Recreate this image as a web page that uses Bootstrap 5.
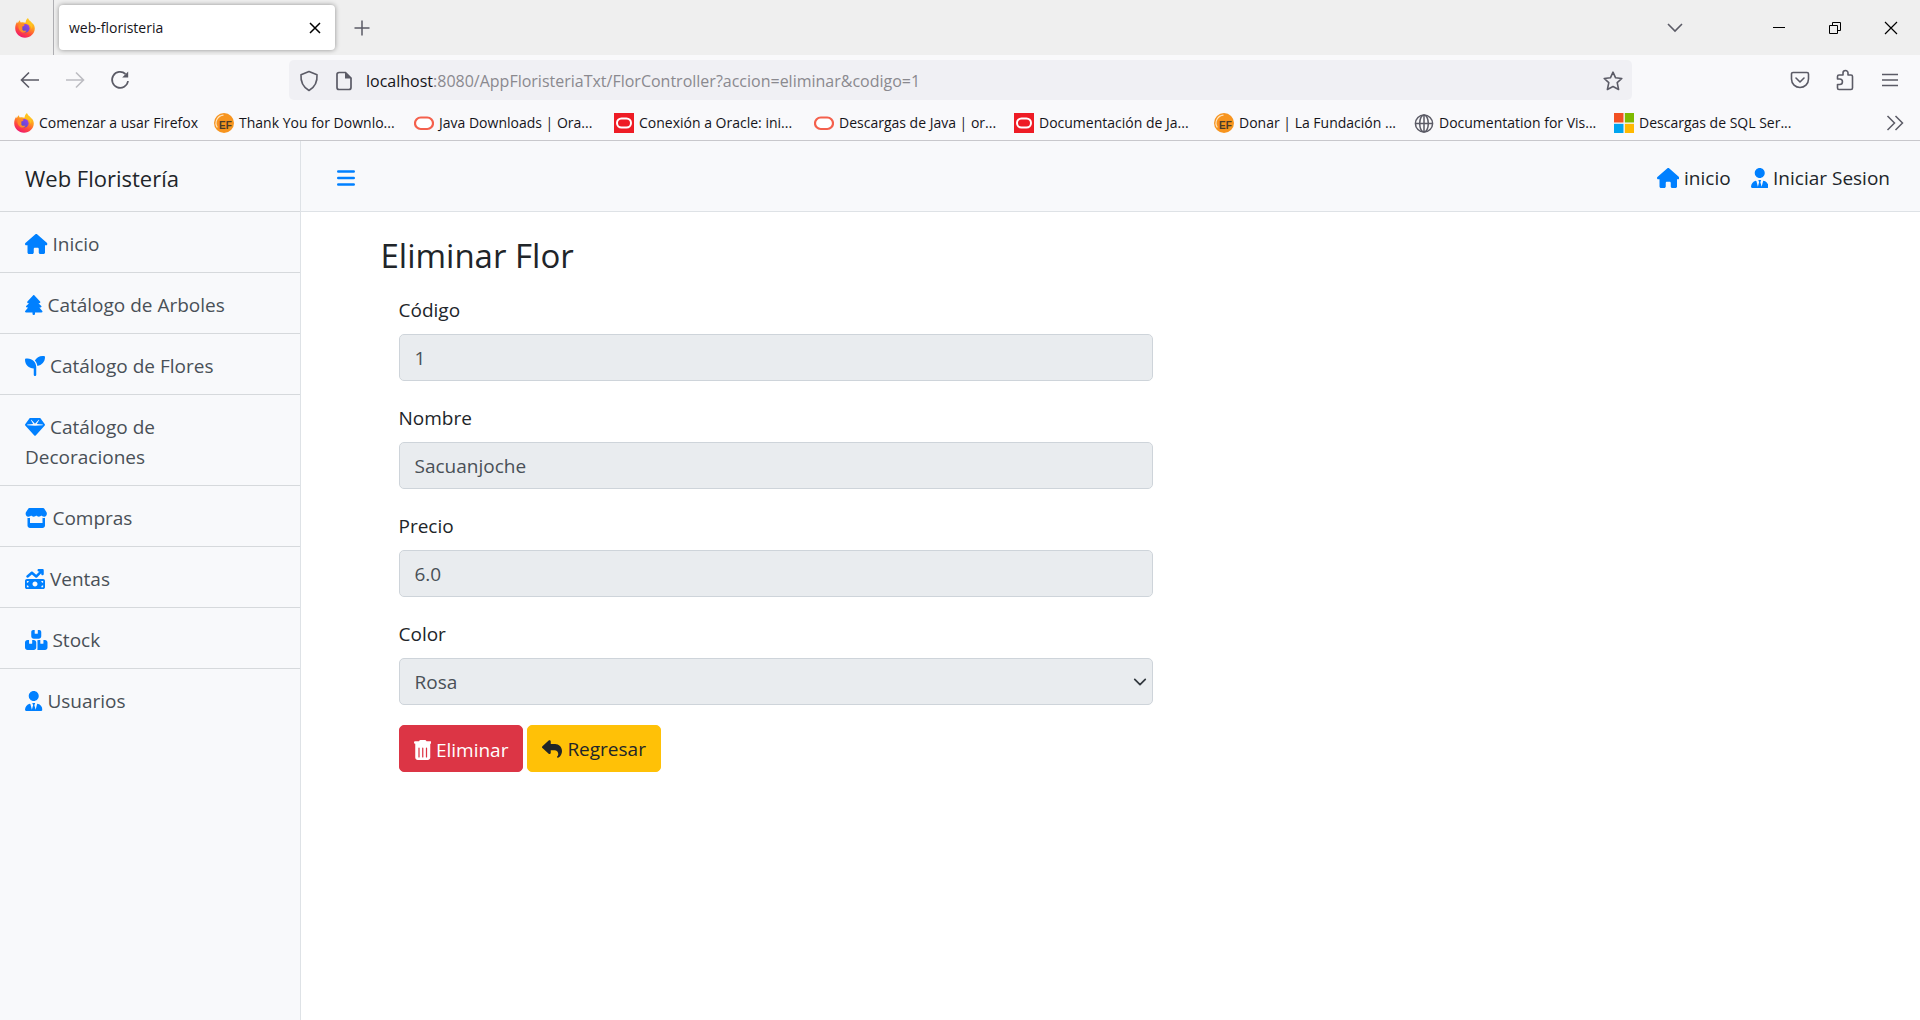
<!DOCTYPE html>
<html lang="es">
<head>
<meta charset="utf-8">
<meta name="viewport" content="width=device-width, initial-scale=1">
<title>web-floristeria</title>
<link rel="stylesheet" href="https://cdn.jsdelivr.net/npm/bootstrap@5.3.0/dist/css/bootstrap.min.css">
<style>
  body { font-family: "Open Sans", "Noto Sans", sans-serif; font-size: 19px; line-height: 30px; color: #212529; background: #fff; }
  button { color: inherit; }
  svg { flex: none; }

  /* browser chrome */
  .chrome { font-size: 14px; line-height: 20px; background: #f9f9fb; border-bottom: 1px solid #c8c8cc; color: #15141a; }
  .icon-btn { display: inline-flex; align-items: center; justify-content: center; padding: 0; border: 0; background: none; color: #5b5b66; }
  .tab-strip { height: 55px; background: #efefef; padding-right: 1px; }
  .pinned { width: 54px; border-right: 1px solid #aeaeb2; padding-left: 15px; }
  .tab-item { width: 276px; height: 45px; margin-left: 5px; padding: 0 12px 0 10px; background: #fff; border-radius: 4px; box-shadow: 0 0 5px rgba(0,0,0,.4); }
  .win-btn { width: 56px; height: 40px; color: #000; }
  .tool-row { height: 50px; padding-left: 7px; }
  .nav-btn { width: 45px; height: 40px; }
  .url-field { height: 40px; background: #f0f0f4; border-radius: 5px; padding: 2px 9px 0; margin-left: 147px; margin-right: 145px; font-size: 16px; }
  .url-field label { margin-left: 14px; }
  .url-field input { border: 0; background: none; padding: 0; color: #8a898f; outline: 0; min-width: 0; }
  .side-btn { width: 45px; height: 40px; }
  .bookmark { width: 200px; gap: 5px; color: #15141a; text-decoration: none; white-space: nowrap; }
  .bookmark-row { height: 35px; padding-left: 14px; }

  /* application */
  .app-shell { min-height: calc(100vh - 141px); }
  .side-menu { width: 301px; flex: none; background: #f8f9fb; border-right: 1px solid #dee2e6; }
  .menu-title { font-size: 22px; padding: 22px 25px 18px; border-bottom: 1px solid #d6d9dc; }
  .menu-link { display: block; padding: 17px 25px 13px; color: #495057; text-decoration: none; border-bottom: 1px solid #d6d9dc; }
  .menu-link:last-child { border-bottom: 0; }
  .fa-ico { height: 20px; width: auto; fill: #0080ff; vertical-align: -3px; }
  .fa-ico.plain { fill: currentColor; }
  .top-bar { background: #f8f9fb; border-bottom: 1px solid #dee2e6; height: 71px; padding: 3px 30px 0 36px; }
  .top-bar a { color: #212529; text-decoration: none; }
  .form-area { max-width: 1460px; margin: 0 auto; padding-top: 20px; }
  .form-area h1 { font-size: 33px; line-height: 48px; font-weight: 400; margin: 0 0 13px; }
  .form-col { max-width: 790px; padding: 0 18px; }
  .form-col .form-label { display: block; padding-top: 2px; margin: 0 0 9px; }
  .form-col .form-control, .form-col .form-select { height: 47px; font-size: 19px; line-height: 30px; padding: 8px 15px; color: #495057; background-color: #e9ecef; border-color: #ced4da; border-radius: 5px; opacity: 1; }
  .form-col .form-select { background-size: 14px; background-position: right 5px center; }
  .field { margin-bottom: 20px; }
  .form-col .btn { font-size: 19px; line-height: 30px; height: 47px; padding: 8px 14px 6px; border-radius: 5px; border-width: 1px; }
  .form-col .btn-warning { --bs-btn-color: #212529; }
</style>
<script src="https://cdn.jsdelivr.net/npm/bootstrap@5.3.0/dist/js/bootstrap.bundle.min.js"></script>
</head>
<body>
<svg width="0" height="0" class="position-absolute" aria-hidden="true">
  <defs>
    <linearGradient id="ffBody" x1="0.8" y1="0" x2="0.3" y2="1"><stop offset="0" stop-color="#ffe226"/><stop offset=".4" stop-color="#ff9a1f"/><stop offset=".7" stop-color="#ff4a3d"/><stop offset="1" stop-color="#ee1572"/></linearGradient>
    <linearGradient id="ffCore" x1="1" y1="0" x2="0" y2="1"><stop offset="0" stop-color="#a03ef0"/><stop offset="1" stop-color="#4a4fc4"/></linearGradient>
    <symbol id="firefox" viewBox="0 0 20 20">
      <path fill="url(#ffBody)" d="M13 .3c.4 1.400 1.100 2.300 2.500 3.300.9.700 1.300 1.500 1.500 2.300.3-.3.4-.7.4-1.200C19 6.500 19.800 8.500 19.800 10.500 19.600 15.800 15.300 19.700 10 19.700S.2 15.700.2 10.300C.2 7.800 1 5.300 2.300 3.600c0 .8.100 1.300.4 1.700C3.300 4 4 2.800 5 2.200c-.1 1 .2 1.800.8 2.300 2-.4 3.300-.2 4.700.3C10.700 3 11.500 1.200 13 .3z"/>
      <path fill="#ffc21f" d="M13 .3c.4 1.400 1.100 2.300 2.500 3.300 2 1.500 2.300 4.400 1.400 7.400C16 8 14 6 11.300 5.600 10.600 3.600 11.500 1.200 13 .3z"/>
      <circle cx="10.300" cy="10.300" r="4.300" fill="url(#ffCore)"/>
      <path fill="#ff8a2a" d="M3.500 6.500c2-1 4.500-.8 6.200.2-.3 1.300-1.500 1.500-2.700 2 .8 1.200.3 2 .3 3 1 1.300 2.500 1.500 4.300.7-1 2-3.300 2.600-5.300 1.500C3.800 12.500 3 9.500 3.500 6.500z"/>
    </symbol>
    <symbol id="eclipse" viewBox="0 0 20 20">
      <circle cx="10" cy="10" r="10" fill="#f7941e"/>
      <path d="M3.300 14.500A8 8 0 0 1 9.500 2.200" fill="none" stroke="#ffe3bd" stroke-width="1.200"/>
      <text x="5" y="15.500" font-family="Liberation Sans, sans-serif" font-weight="bold" font-size="10" fill="#4a3a2a">EF</text>
    </symbol>
    <symbol id="java" viewBox="0 0 20 20"><rect x="1" y="4.500" width="18" height="11.500" rx="5.750" fill="#fff" stroke="#f4604c" stroke-width="2.200"/></symbol>
    <symbol id="oracle" viewBox="0 0 20 20"><path fill="#ee1c25" d="M0 0h20v20H0z"/><rect x="3" y="5.500" width="14" height="9" rx="4.500" fill="none" stroke="#fff" stroke-width="2"/></symbol>
    <symbol id="globe" viewBox="0 0 20 20"><g fill="none" stroke="#5b5b66" stroke-width="1.500"><circle cx="10" cy="10.500" r="8.600"/><ellipse cx="10" cy="10.500" rx="4.300" ry="8.600"/><path d="M10 2v17M1.500 10.500h17"/></g></symbol>
    <symbol id="windows" viewBox="0 0 20 20"><path fill="#f25022" d="M0 0h9.500v9.500H0z"/><path fill="#7fba00" d="M10.800 0H20v9.500h-9.200z"/><path fill="#00a4ef" d="M0 10.800h9.500V20H0z"/><path fill="#ffb900" d="M10.800 10.800H20V20h-9.200z"/></symbol>
    <symbol id="house" viewBox="0 0 576 512"><path d="M575.8 255.500c0 18-15 32.100-32 32.100h-32l.7 160.200c0 2.700-.2 5.400-.5 8.100V472c0 22.100-17.900 40-40 40H392c-22.100 0-40-17.900-40-40V384c0-17.700-14.300-32-32-32H256c-17.700 0-32 14.300-32 32v88c0 22.100-17.900 40-40 40H104c-22.100 0-40-17.900-40-40V287.600H32c-18 0-32-14-32-32.100 0-9 3-17 10-24L266.400 8c7-7 15-8 22-8s15 2 21 7L564.800 231.500c8 7 12 15 11 24z"/></symbol>
    <symbol id="tie" viewBox="0 0 448 512"><path d="M224 256c-70.700 0-128-57.300-128-128S153.300 0 224 0s128 57.300 128 128s-57.300 128-128 128zM209.100 359.200l-18.600-31c-6.400-10.700 1.300-24.200 13.700-24.200h39.500c12.400 0 20.100 13.600 13.700 24.200l-18.600 31 33.400 123.900 36-146.900c2-8.100 9.800-13.400 17.900-11.300 70.100 17.600 121.900 81 121.900 156.400 0 17-13.800 30.700-30.700 30.700H285.500c-2.100 0-4-.4-5.800-1.100l.3 1.100H168l.3-1.100c-1.800.7-3.800 1.100-5.800 1.100H30.700C13.800 512 0 498.200 0 481.300c0-75.500 51.900-138.900 121.900-156.400 8.100-2 15.900 3.300 17.900 11.300l36 146.900 33.400-123.900z"/></symbol>
  </defs>
</svg>

<header class="chrome">
  <div class="tab-strip d-flex align-items-center">
    <div class="pinned h-100 d-flex align-items-center"><svg width="20" height="20"><use href="#firefox"/></svg></div>
    <div class="tab-item d-flex align-items-center justify-content-between">
      <span>web-floristeria</span>
      <button class="icon-btn text-black" aria-label="Cerrar pestaña"><svg width="16" height="16" fill="none" stroke="currentColor" stroke-width="1.500"><path d="M3 3l10 10M13 3L3 13"/></svg></button>
    </div>
    <button class="icon-btn nav-btn ms-1" aria-label="Nueva pestaña"><svg width="16" height="16" fill="none" stroke="currentColor" stroke-width="1.500"><path d="M8 .5v15M.5 8h15"/></svg></button>
    <button class="icon-btn win-btn ms-auto me-5" aria-label="Listar pestañas"><svg width="16" height="16" fill="none" stroke="#5b5b66" stroke-width="1.600"><path d="M1 4l7 7 7-7"/></svg></button>
    <button class="icon-btn win-btn" aria-label="Minimizar"><svg width="12" height="12" stroke="currentColor"><path d="M0 5.500h12"/></svg></button>
    <button class="icon-btn win-btn" aria-label="Restaurar"><svg width="12" height="12" fill="none" stroke="currentColor"><path d="M.5 3.500h8v8h-8zM3.500 3.500v-3h8v8h-3"/></svg></button>
    <button class="icon-btn win-btn" aria-label="Cerrar"><svg width="14" height="14" stroke="currentColor" stroke-width="1.200"><path d="M1 1l12 12M13 1L1 13"/></svg></button>
  </div>

  <div class="tool-row d-flex align-items-center">
    <button class="icon-btn nav-btn" aria-label="Atrás"><svg width="20" height="18" fill="none" stroke="currentColor" stroke-width="1.600"><path d="M19 9H2M9 1.500L1.500 9 9 16.500"/></svg></button>
    <button class="icon-btn nav-btn" aria-label="Adelante"><svg width="20" height="18" fill="none" stroke="#bcbcc2" stroke-width="1.600"><path d="M1 9h17M11 1.500L18.500 9 11 16.500"/></svg></button>
    <button class="icon-btn nav-btn" aria-label="Recargar"><svg width="20" height="20" fill="none" stroke="currentColor" stroke-width="1.700"><path d="M15.500 4A8 8 0 1 0 18 11"/><path d="M18.200 1.500v6h-6z" fill="currentColor" stroke="none"/></svg></button>
    <div class="url-field d-flex align-items-center flex-grow-1">
      <svg width="22" height="22" fill="none" stroke="#5b5b66" stroke-width="1.600"><path d="M11 1.500l8 3.200c.5 6.500-2 12.300-8 15.800C5 17 2.500 11.200 3 4.700z" stroke-linejoin="round"/></svg>
      <svg class="ms-3" width="16" height="20" viewBox="0 0 16 20" fill="none" stroke="#5b5b66" stroke-width="1.700"><path d="M3 1.500h6.500L15 7v9.500a2 2 0 0 1-2 2H3a2 2 0 0 1-2-2v-13a2 2 0 0 1 2-2z"/><path d="M9 1v6.500h6.500z" fill="#5b5b66" stroke="none"/></svg>
      <label for="url">localhost</label>
      <input id="url" class="flex-grow-1" type="text" value=":8080/AppFloristeriaTxt/FlorController?accion=eliminar&amp;codigo=1">
      <button class="icon-btn" aria-label="Marcar"><svg width="20" height="20" fill="none" stroke="#5b5b66" stroke-width="1.600" stroke-linejoin="round"><path d="M10 1.200l2.600 5.600 6.200.7-4.600 4.200 1.400 6.800L10 15.500l-5.600 3 1.400-6.800L1.200 7.500l6.200-.7z"/></svg></button>
    </div>
    <button class="icon-btn side-btn" aria-label="Pocket"><svg width="20" height="20" fill="none" stroke="currentColor" stroke-width="1.600" stroke-linecap="round" stroke-linejoin="round"><path d="M3 2.500h14a1.500 1.500 0 0 1 1.500 1.500v5c0 5-4 8.500-8.500 8.500S1.500 14 1.500 9V4A1.500 1.500 0 0 1 3 2.500zM6 8l4 4 4-4"/></svg></button>
    <button class="icon-btn side-btn" aria-label="Extensiones"><svg width="20" height="22" fill="none" stroke="currentColor" stroke-width="1.600" stroke-linejoin="round"><path d="M2.500 10V7.500A1.500 1.500 0 0 1 4 6h4V4a2.500 2.500 0 0 1 5 0v2h3a1.500 1.500 0 0 1 1.500 1.500V19a1.500 1.500 0 0 1-1.500 1.500H4A1.500 1.500 0 0 1 2.500 19v-3.500h2.200a2.700 2.700 0 0 0 0-5.500z"/></svg></button>
    <button class="icon-btn side-btn me-2" aria-label="Menú"><svg width="16" height="14" stroke="currentColor" stroke-width="1.600"><path d="M0 1.500h16M0 7h16M0 12.500h16"/></svg></button>
  </div>

  <nav class="bookmark-row d-flex align-items-center" aria-label="Marcadores">
    <a class="bookmark d-flex align-items-center" href="#"><svg width="20" height="20"><use href="#firefox"/></svg>Comenzar a usar Firefox</a>
    <a class="bookmark d-flex align-items-center" href="#"><svg width="20" height="20"><use href="#eclipse"/></svg>Thank You for Downlo...</a>
    <a class="bookmark d-flex align-items-center" href="#"><svg width="20" height="20"><use href="#java"/></svg>Java Downloads | Ora...</a>
    <a class="bookmark d-flex align-items-center" href="#"><svg width="20" height="20"><use href="#oracle"/></svg>Conexión a Oracle: ini...</a>
    <a class="bookmark d-flex align-items-center" href="#"><svg width="20" height="20"><use href="#java"/></svg>Descargas de Java | or...</a>
    <a class="bookmark d-flex align-items-center" href="#"><svg width="20" height="20"><use href="#oracle"/></svg>Documentación de Ja...</a>
    <a class="bookmark d-flex align-items-center" href="#"><svg width="20" height="20"><use href="#eclipse"/></svg>Donar | La Fundación ...</a>
    <a class="bookmark d-flex align-items-center" href="#"><svg width="20" height="20"><use href="#globe"/></svg>Documentation for Vis...</a>
    <a class="bookmark d-flex align-items-center" href="#"><svg width="20" height="20"><use href="#windows"/></svg>Descargas de SQL Ser...</a>
    <button class="icon-btn ms-auto me-3" aria-label="Más marcadores"><svg width="18" height="16" fill="none" stroke="currentColor" stroke-width="1.500"><path d="M1.500 1l7 7-7 7M9.500 1l7 7-7 7"/></svg></button>
  </nav>
</header>

<div class="app-shell d-flex">
  <aside class="side-menu">
    <div class="menu-title">Web Floristería</div>
    <nav>
      <a class="menu-link" href="#"><svg class="fa-ico" viewBox="0 0 576 512"><use href="#house"/></svg> Inicio</a>
      <a class="menu-link" href="#"><svg class="fa-ico" viewBox="0 0 448 512"><path d="M210.600 5.900L62 169.400c-3.900 4.200-6 9.800-6 15.500C56 197.700 66.300 208 79.100 208H104L30.600 281.400c-4.200 4.200-6.600 10-6.600 16C24 309.900 34.100 320 46.600 320H80L5.400 409.500C1.900 413.700 0 419 0 424.500c0 13 10.500 23.500 23.500 23.500H192v32c0 17.700 14.300 32 32 32s32-14.300 32-32V448H424.500c13 0 23.500-10.500 23.500-23.500 0-5.500-1.900-10.800-5.400-15L368 320h33.400c12.500 0 22.600-10.100 22.600-22.600 0-6-2.400-11.800-6.600-16L344 208h24.900c12.700 0 23.100-10.300 23.100-23.100 0-5.700-2.100-11.300-6-15.500L237.400 5.900C234 2.100 229.100 0 224 0s-10 2.100-13.400 5.900z"/></svg> Catálogo de Arboles</a>
      <a class="menu-link" href="#"><svg class="fa-ico" viewBox="0 0 512 512"><path d="M512 32c0 113.600-84.600 207.500-194.200 222-7.100-53.400-30.600-101.600-65.300-139.300C290.800 46.300 364 0 448 0h32c17.700 0 32 14.300 32 32zM0 96C0 78.300 14.300 64 32 64H64c123.700 0 224 100.300 224 224V480c0 17.700-14.300 32-32 32s-32-14.300-32-32V320C100.300 320 0 219.700 0 96z"/></svg> Catálogo de Flores</a>
      <a class="menu-link" href="#"><svg class="fa-ico" viewBox="0 0 512 512"><path fill-rule="evenodd" d="M116.700 33.800c4.500-6.100 11.700-9.800 19.300-9.800H376c7.600 0 14.800 3.600 19.300 9.800l112 152c6.800 9.200 6.100 21.900-1.500 30.400l-232 256c-4.500 5-11 7.900-17.800 7.900s-13.200-2.900-17.800-7.900l-232-256c-7.700-8.500-8.300-21.200-1.500-30.400l112-152zm38.500 39.800c-3.300 2.500-4.200 7-2.100 10.500l57.400 95.600L63.300 192c-4.100.3-7.300 3.800-7.300 8s3.200 7.600 7.300 8l192 16h1.300l192-16c4.100-.3 7.300-3.800 7.300-8s-3.200-7.600-7.300-8L301.500 179.800l57.400-95.600c2.100-3.500 1.200-8.100-2.100-10.500s-7.900-2-10.700 1L256 172.200 165.900 74.600c-2.800-3-7.400-3.400-10.700-1z"/></svg> Catálogo de Decoraciones</a>
      <a class="menu-link" href="#"><svg class="fa-ico" viewBox="0 0 576 512"><path d="M547.600 103.800L490.300 13.100C485.200 5 476.100 0 466.400 0H109.600C99.900 0 90.800 5 85.700 13.100L28.300 103.800c-29.600 46.800-3.400 111.900 51.900 119.400 4 .5 8.100.8 12.100.8 26.100 0 49.300-11.400 65.200-29 15.900 17.600 39.100 29 65.200 29s49.300-11.400 65.200-29c15.900 17.600 39.100 29 65.200 29s49.300-11.400 65.200-29c16 17.600 39.100 29 65.200 29 4.100 0 8.100-.3 12.100-.8 55.500-7.400 81.800-72.500 52.100-119.400zM499.700 254.900c-5.300.7-10.700 1.100-16.200 1.100-12.400 0-24.300-1.900-35.400-5.300V384H128V250.600c-11.200 3.500-23.200 5.400-35.600 5.400-5.500 0-11-.4-16.300-1.100-4.100-.6-8.100-1.300-12-2.300V448c0 35.300 28.700 64 64 64H448c35.300 0 64-28.700 64-64V252.600c-4 1-8 1.800-12.300 2.300z"/></svg> Compras</a>
      <a class="menu-link" href="#"><svg class="fa-ico" viewBox="0 0 512 512"><path fill-rule="evenodd" d="M470.700 9.400c3 3.100 5.300 6.600 6.900 10.300s2.400 7.800 2.400 12.200v96.100c0 17.700-14.300 32-32 32s-32-14.300-32-32V109.300L310.600 214.600c-11.800 11.800-30.800 12.600-43.500 1.700L176 138.100 84.800 216.300c-13.400 11.500-33.600 9.900-45.100-3.500s-9.900-33.600 3.500-45.100l112-96c12-10.300 29.700-10.300 41.700 0l89.500 76.700L370.700 64H352c-17.700 0-32-14.300-32-32s14.300-32 32-32h96c8.800 0 16.800 3.600 22.600 9.300zM0 304c0-26.500 21.500-48 48-48H464c26.500 0 48 21.500 48 48V464c0 26.500-21.500 48-48 48H48c-26.500 0-48-21.500-48-48V304zM48 416v48H96c0-26.500-21.500-48-48-48zM96 304H48v48c26.500 0 48-21.500 48-48zM464 416c-26.500 0-48 21.500-48 48h48V416zM416 304c0 26.500 21.500 48 48 48V304H416zm-96 80c0-35.300-28.700-64-64-64s-64 28.700-64 64 28.700 64 64 64 64-28.700 64-64z"/></svg> Ventas</a>
      <a class="menu-link" href="#"><svg class="fa-ico" viewBox="0 0 576 512"><path d="M248 0H208c-26.500 0-48 21.500-48 48V160c0 35.300 28.700 64 64 64H352c35.300 0 64-28.700 64-64V48c0-26.500-21.500-48-48-48H328V80c0 8.800-7.200 16-16 16H264c-8.800 0-16-7.200-16-16V0zM64 256c-35.300 0-64 28.700-64 64V448c0 35.300 28.700 64 64 64H224c35.300 0 64-28.700 64-64V320c0-35.300-28.700-64-64-64H184v80c0 8.800-7.200 16-16 16H120c-8.800 0-16-7.200-16-16V256H64zM352 512H512c35.300 0 64-28.700 64-64V320c0-35.300-28.700-64-64-64H472v80c0 8.800-7.200 16-16 16H408c-8.800 0-16-7.200-16-16V256H352c-15 0-28.800 5.100-39.700 13.800 4.900 10.400 7.700 22 7.700 34.200V464c0 12.200-2.800 23.800-7.700 34.200C323.200 506.900 337 512 352 512z"/></svg> Stock</a>
      <a class="menu-link" href="#"><svg class="fa-ico" viewBox="0 0 448 512"><use href="#tie"/></svg> Usuarios</a>
    </nav>
  </aside>

  <div class="flex-grow-1">
    <nav class="top-bar d-flex align-items-center justify-content-between">
      <button class="icon-btn" aria-label="Mostrar menú"><svg width="18" height="16" stroke="#0080ff" stroke-width="2.600" stroke-linecap="round"><path d="M1.300 1.500h15.400M1.300 8h15.400M1.300 14.500h15.400"/></svg></button>
      <div class="d-flex gap-3">
        <a class="me-1" href="#"><svg class="fa-ico" viewBox="0 0 576 512"><use href="#house"/></svg> inicio</a>
        <a href="#"><svg class="fa-ico" viewBox="0 0 448 512"><use href="#tie"/></svg> Iniciar Sesion</a>
      </div>
    </nav>

    <main class="form-area">
      <h1>Eliminar Flor</h1>
      <form class="form-col">
        <div class="field"><label class="form-label" for="codigo">Código</label><input class="form-control" id="codigo" type="text" value="1" readonly></div>
        <div class="field"><label class="form-label" for="nombre">Nombre</label><input class="form-control" id="nombre" type="text" value="Sacuanjoche" readonly></div>
        <div class="field"><label class="form-label" for="precio">Precio</label><input class="form-control" id="precio" type="text" value="6.0" readonly></div>
        <div class="field"><label class="form-label" for="color">Color</label><select class="form-select" id="color" disabled><option>Rosa</option></select></div>
        <div class="d-flex gap-1">
          <button class="btn btn-danger" type="button"><svg class="fa-ico plain" viewBox="0 0 448 512"><path fill-rule="evenodd" d="M135.200 17.700C140.600 6.800 151.700 0 163.800 0H284.200c12.100 0 23.200 6.800 28.600 17.700L320 32h96c17.700 0 32 14.300 32 32s-14.300 32-32 32H32C14.300 96 0 81.700 0 64S14.300 32 32 32h96zM32 96H416V448c0 35.300-28.700 64-64 64H96c-35.300 0-64-28.700-64-64zM128 192c-8.800 0-16 7.200-16 16V432c0 8.800 7.200 16 16 16s16-7.200 16-16V208c0-8.800-7.200-16-16-16zM224 192c-8.800 0-16 7.200-16 16V432c0 8.800 7.200 16 16 16s16-7.200 16-16V208c0-8.800-7.200-16-16-16zM320 192c-8.800 0-16 7.200-16 16V432c0 8.800 7.200 16 16 16s16-7.200 16-16V208c0-8.800-7.200-16-16-16z"/></svg> Eliminar</button>
          <a class="btn btn-warning" href="#"><svg class="fa-ico plain" viewBox="0 0 512 512"><path d="M205 34.800c11.500 5.100 19 16.600 19 29.200v64H336c97.200 0 176 78.800 176 176 0 113.300-81.500 163.900-100.200 174.100-2.500 1.400-5.300 1.900-8.100 1.900-10.900 0-19.700-8.900-19.700-19.700 0-7.500 4.300-14.400 9.800-19.500 9.400-8.800 22.200-26.400 22.200-56.700 0-53-43-96-96-96H224v64c0 12.600-7.400 24.100-19 29.200s-25 3-34.400-5.400l-160-144C3.900 225.700 0 217.100 0 208s3.900-17.700 10.600-23.800l160-144c9.400-8.500 22.900-10.600 34.400-5.400z"/></svg> Regresar</a>
        </div>
      </form>
    </main>
  </div>
</div>
</body>
</html>
